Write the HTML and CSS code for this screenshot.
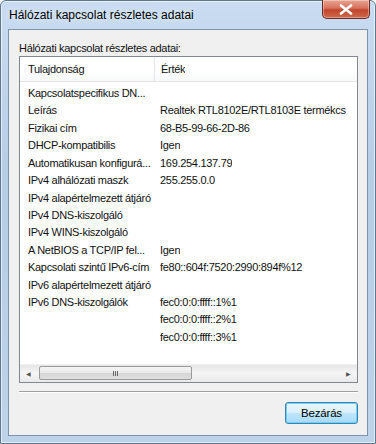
FILE: index.html
```html
<!DOCTYPE html>
<html lang="hu">
<head>
  <meta charset="UTF-8">
  <title>Hálózati kapcsolat részletes adatai</title>
  <link rel="stylesheet" href="styles.css">
</head>
<body>
  <div class="window">
    <div class="titlebar">
      <span class="title">Hálózati kapcsolat részletes adatai</span>
      <div class="close">
        <svg width="14" height="11" viewBox="0 0 14 11"><path d="M2 1.5 L12 9.5 M12 1.5 L2 9.5" stroke="#fff" stroke-width="2.6" stroke-linecap="round"/></svg>
      </div>
    </div>
    <div class="client">
      <div class="caption">Hálózati kapcsolat részletes adatai:</div>
      <div class="list">
        <div class="head">
          <div class="col1">Tulajdonság</div>
          <div class="col2">Érték</div>
        </div>
        <div class="rows">
          <div class="row"><div class="col1">Kapcsolatspecifikus DN...</div><div class="col2"></div></div>
          <div class="row"><div class="col1">Leírás</div><div class="col2">Realtek RTL8102E/RTL8103E termékcs</div></div>
          <div class="row"><div class="col1">Fizikai cím</div><div class="col2">68-B5-99-66-2D-86</div></div>
          <div class="row"><div class="col1">DHCP-kompatibilis</div><div class="col2">Igen</div></div>
          <div class="row"><div class="col1">Automatikusan konfigurá...</div><div class="col2">169.254.137.79</div></div>
          <div class="row"><div class="col1">IPv4 alhálózati maszk</div><div class="col2">255.255.0.0</div></div>
          <div class="row"><div class="col1">IPv4 alapértelmezett átjáró</div><div class="col2"></div></div>
          <div class="row"><div class="col1">IPv4 DNS-kiszolgáló</div><div class="col2"></div></div>
          <div class="row"><div class="col1">IPv4 WINS-kiszolgáló</div><div class="col2"></div></div>
          <div class="row"><div class="col1">A NetBIOS a TCP/IP fel...</div><div class="col2">Igen</div></div>
          <div class="row"><div class="col1">Kapcsolati szintű IPv6-cím</div><div class="col2">fe80::604f:7520:2990:894f%12</div></div>
          <div class="row"><div class="col1">IPv6 alapértelmezett átjáró</div><div class="col2"></div></div>
          <div class="row"><div class="col1">IPv6 DNS-kiszolgálók</div><div class="col2">fec0:0:0:ffff::1%1</div></div>
          <div class="row"><div class="col1"></div><div class="col2">fec0:0:0:ffff::2%1</div></div>
          <div class="row"><div class="col1"></div><div class="col2">fec0:0:0:ffff::3%1</div></div>
        </div>
        <div class="hscroll">
          <div class="arrow">&#9664;</div>
          <div class="track"><div class="thumb"><span class="grip"></span></div></div>
          <div class="arrow">&#9654;</div>
        </div>
      </div>
      <div class="sep"></div>
      <div class="buttons">
        <button class="btn">Bezárás</button>
      </div>
    </div>
  </div>
</body>
</html>
```

FILE: styles.css
```css
html, body {margin: 0; padding: 0; background: #fff;}
body {font-family: "Liberation Sans", Arial, sans-serif; font-size: 11px; letter-spacing: -0.3px; color: #111;}

.window {width: 376px; height: 444px; box-sizing: border-box; display: flex; flex-direction: column; border: 1px solid #5d7790; border-radius: 6px 6px 0 0; background: linear-gradient(180deg, #c9dcf1 0%, #b6cde6 40%, #bcd3ea 100%); box-shadow: inset 0 0 0 1px rgba(255,255,255,0.6);}

.titlebar {height: 28px; display: flex; align-items: flex-start; padding-left: 8px;}
.title {margin-top: 7px; font-size: 12px; letter-spacing: 0; color: #000; text-shadow: 0 0 6px rgba(255,255,255,0.9);}
.close {margin-left: auto; margin-right: 5px; width: 46px; height: 18px; margin-top: -1px; display: flex; align-items: center; justify-content: center; border: 1px solid #6b2a24; border-top: none; border-radius: 0 0 5px 5px; background: linear-gradient(180deg, #e8a493 0%, #d7715c 45%, #c2452e 55%, #cf6a4c 100%); box-shadow: inset 0 0 0 1px rgba(255,255,255,0.35);}

.client {flex: 1; margin: 0 7px 7px 7px; border: 1px solid #7d93ab; background: #f0f0f0; display: flex; flex-direction: column; padding: 0 9px 0 10px;}
.caption {margin-top: 10px; height: 16px; line-height: 16px;}

.list {height: 325px; border: 1px solid #828790; background: #fff; display: flex; flex-direction: column;}
.head {display: flex; height: 24px; line-height: 24px; border-bottom: 1px solid #e5e5e5; background: linear-gradient(180deg, #fff 0%, #fff 60%, #f7f8f9 100%);}
.head .col1 {border-right: 1px solid #e3e5e8;}
.col1 {width: 126px; padding-left: 8px; flex-shrink: 0; white-space: nowrap; overflow: hidden;}
.col2 {padding-left: 6px; white-space: nowrap; overflow: hidden;}
.rows {flex: 1; padding-top: 3px; overflow: hidden;}
.row {display: flex; height: 17.43px; line-height: 17.43px;}

.hscroll {height: 17px; display: flex; align-items: center; border-top: 1px solid #f0f0f0; background: linear-gradient(180deg, #e6e6e6, #f5f5f5 50%, #e9e9e9);}
.arrow {width: 17px; text-align: center; font-size: 6px; color: #555;}
.track {flex: 1; height: 15px; display: flex;}
.thumb {width: 153px; margin-left: 2px; height: 14px; box-sizing: border-box; border: 1px solid #9a9a9a; border-radius: 2px; background: linear-gradient(180deg, #f5f5f5 0%, #e8e8e8 50%, #d6d6d6 51%, #dedede 100%); display: flex; align-items: center; justify-content: center;}
.grip {width: 6px; height: 5px; background: repeating-linear-gradient(90deg, #666 0 1px, transparent 1px 2px);}

.sep {height: 0; margin-top: 8px; border-top: 1px solid #a0a0a0; border-bottom: 1px solid #fff;}
.buttons {display: flex; justify-content: flex-end; margin-top: 9px;}
.btn {width: 73px; height: 22px; font-family: inherit; font-size: 11.5px; letter-spacing: -0.2px; color: #000; border: 1px solid #3c7fb1; border-radius: 3px; background: linear-gradient(180deg, #eaf6fd 0%, #d9f0fc 50%, #bee6fd 51%, #a7d9f5 100%); box-shadow: inset 0 0 0 1px #6ed4f6; padding: 0;}
```
